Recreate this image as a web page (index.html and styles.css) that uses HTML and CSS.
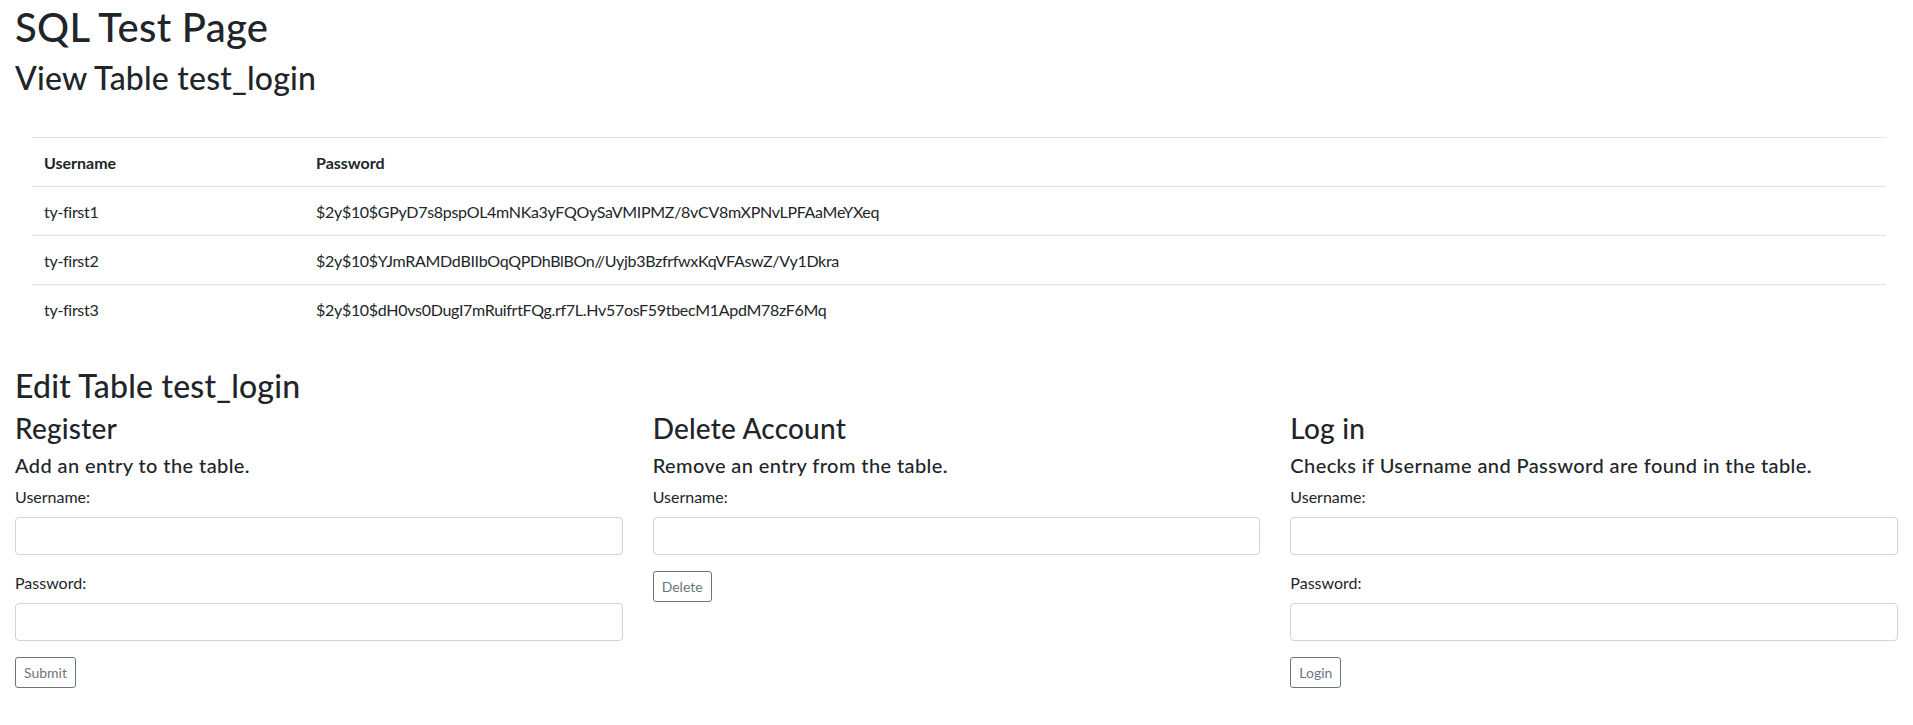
FILE: index.html
```html
<!DOCTYPE html>
<html lang="en">
<head>
<meta charset="utf-8">
<title>SQL Test Page</title>
<link rel="stylesheet" href="styles.css">
</head>
<body>
<div class="container">
  <h1 class="h1">SQL Test Page</h1>
  <h2 class="h2 view-title">View Table test_login</h2>
  <div class="table-wrap">
    <table class="table">
      <thead>
        <tr><th class="col-user">Username</th><th>Password</th></tr>
      </thead>
      <tbody>
        <tr><td>ty-first1</td><td>$2y$10$GPyD7s8pspOL4mNKa3yFQOySaVMIPMZ/8vCV8mXPNvLPFAaMeYXeq</td></tr>
        <tr><td>ty-first2</td><td>$2y$10$YJmRAMDdBIIbOqQPDhBlBOn//Uyjb3BzfrfwxKqVFAswZ/Vy1Dkra</td></tr>
        <tr><td>ty-first3</td><td>$2y$10$dH0vs0DugI7mRuifrtFQg.rf7L.Hv57osF59tbecM1ApdM78zF6Mq</td></tr>
      </tbody>
    </table>
  </div>
  <h2 class="h2 edit-title">Edit Table test_login</h2>
  <div class="row">
    <div class="col">
      <h3 class="h3">Register</h3>
      <h5 class="h5">Add an entry to the table.</h5>
      <div class="form-group">
        <label class="label">Username:</label>
        <input class="form-control" type="text">
      </div>
      <div class="form-group">
        <label class="label">Password:</label>
        <input class="form-control" type="password">
      </div>
      <button class="btn">Submit</button>
    </div>
    <div class="col">
      <h3 class="h3">Delete Account</h3>
      <h5 class="h5">Remove an entry from the table.</h5>
      <div class="form-group">
        <label class="label">Username:</label>
        <input class="form-control" type="text">
      </div>
      <button class="btn">Delete</button>
    </div>
    <div class="col">
      <h3 class="h3">Log in</h3>
      <h5 class="h5">Checks if Username and Password are found in the table.</h5>
      <div class="form-group">
        <label class="label">Username:</label>
        <input class="form-control" type="text">
      </div>
      <div class="form-group">
        <label class="label">Password:</label>
        <input class="form-control" type="password">
      </div>
      <button class="btn">Login</button>
    </div>
  </div>
</div>
</body>
</html>
```

FILE: styles.css
```css
* { box-sizing: border-box; }
html, body {
  margin: 0;
  background: #fff;
}
body {
  font-family: Lato, "Open Sans", sans-serif;
  font-size: 16px;
  line-height: 1.5;
  color: #212529;
}
.container {
  padding: 3px 15px 30px;
}
.h1, .h2, .h3, .h5 {
  margin: 0 0 8px;
  font-weight: 500;
  line-height: 1.2;
}
.h1 { font-size: 40px; letter-spacing: 0.3px; }
.h2 { font-size: 32px; letter-spacing: 0.2px; }
.h3 { font-size: 28px; letter-spacing: 0.2px; }
.h5 { font-size: 20px; letter-spacing: 0.4px; }
.view-title { margin-top: 4px; }
.table-wrap {
  padding: 32px 12px 0 17px;
}
.table {
  width: 100%;
  border-collapse: collapse;
  margin-bottom: 16px;
}
.table th, .table td {
  padding: 13px 12px 11px;
  text-align: left;
  vertical-align: top;
  border-top: 1px solid #dee2e6;
  font-size: 16px;
}
.table td { letter-spacing: -0.3px; }
.table th { font-weight: 700; }
.col-user { width: 272px; }
.edit-title { margin-top: 34px; margin-bottom: 6px; }
.row {
  display: grid;
  grid-template-columns: repeat(3, 1fr);
  column-gap: 30px;
}
.form-group { margin-bottom: 16px; }
.label {
  display: inline-block;
  margin-bottom: 8px;
}
.form-control {
  display: block;
  width: 100%;
  height: 38px;
  padding: 6px 12px;
  font: inherit;
  border: 1px solid #ced4da;
  border-radius: 4px;
  background: #fff;
}
.btn {
  display: inline-block;
  font-family: inherit;
  font-size: 14px;
  line-height: 1.5;
  padding: 4px 8px;
  color: #6c757d;
  background: transparent;
  border: 1px solid #6c757d;
  border-radius: 3px;
}
```
